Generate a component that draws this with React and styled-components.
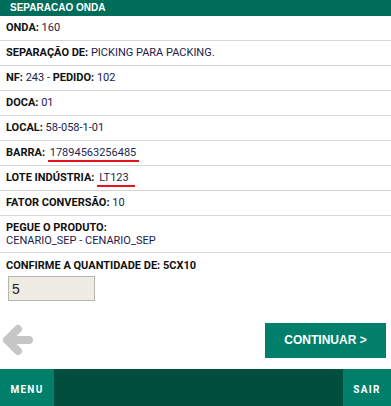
import React from "react";
import styled, { createGlobalStyle } from "styled-components";

const Global = createGlobalStyle`
  html, body { margin: 0; padding: 0; background: #fff; }
  body { font-family: Roboto, "Liberation Sans", Arial, sans-serif; }
  * { box-sizing: border-box; }
`;

const Page = styled.div`
  min-height: 100vh;
  display: flex;
  flex-direction: column;
`;

const Header = styled.div`
  height: 16px;
  line-height: 16px;
  padding-left: 10px;
  background: #006d5b;
  color: #fff;
  font-family: "Liberation Sans", Arial, sans-serif;
  font-weight: bold;
  font-size: 10px;
`;

const Row = styled.div`
  height: ${(p) => (p.$tall ? "37px" : "25px")};
  border-bottom: 1px solid #d6d6d6;
  padding: ${(p) => (p.$tall ? "5px 6px 0" : "0 6px")};
  font-size: 11px;
  line-height: ${(p) => (p.$tall ? "13px" : "24px")};
  white-space: nowrap;
  color: #1e1a40;
`;

const Label = styled.b`
  font-weight: bold;
  color: #111;
`;

const Value = styled.span`
  color: #221a4c;
`;

const Marked = styled.span`
  color: #1c2850;
  border-bottom: 2px solid #e3141e;
  padding: 0 ${(p) => p.$right || 3}px 1px 2px;
`;

const Line = styled.div`
  line-height: 13px;
`;

const Confirm = styled.div`
  padding: 6px 6px 0;
  font-size: 11px;
  line-height: 13px;
`;

const QtyInput = styled.input`
  display: block;
  margin: 4px 0 0 2px;
  width: 87px;
  height: 25px;
  border: 1px solid #b4b4b0;
  background: #efede3;
  font-family: "Liberation Sans", Arial, sans-serif;
  font-size: 14px;
  color: #222;
  padding: 0 0 0 3px;
  outline: none;
`;

const Actions = styled.div`
  display: flex;
  align-items: center;
  justify-content: space-between;
  padding: 21px 5px 0 0;
`;

const BackButton = styled.button`
  border: 0;
  background: none;
  padding: 0;
  width: 34px;
  height: 36px;
  display: flex;
  cursor: pointer;
`;

const Continue = styled.button`
  width: 121px;
  height: 35px;
  border: 0;
  background: #00806a;
  color: #fff;
  font-family: "Liberation Sans", Arial, sans-serif;
  font-weight: bold;
  font-size: 12px;
  cursor: pointer;
`;

const Footer = styled.div`
  margin-top: auto;
  height: 37px;
  display: flex;
  background: #004f3e;
`;

const FooterItem = styled.div`
  width: ${(p) => p.$w}px;
  background: #00806a;
  color: #fff;
  font-family: Roboto, "Liberation Sans", Arial, sans-serif;
  font-weight: bold;
  font-size: 10px;
  letter-spacing: 1.3px;
  display: flex;
  align-items: center;
  justify-content: center;
  padding-top: 4px;
`;

const Spacer = styled.div`
  flex: 1;
`;

export default function App() {
  return (
    <Page>
      <Global />
      <Header>SEPARACAO ONDA</Header>
      <Row>
        <Label>ONDA:</Label> <Value>160</Value>
      </Row>
      <Row>
        <Label>SEPARAÇÃO DE:</Label> <Value>PICKING PARA PACKING.</Value>
      </Row>
      <Row>
        <Label>NF:</Label> <Value>243 - </Value>
        <Label>PEDIDO:</Label> <Value>102</Value>
      </Row>
      <Row>
        <Label>DOCA:</Label> <Value>01</Value>
      </Row>
      <Row>
        <Label>LOCAL:</Label> <Value>58-058-1-01</Value>
      </Row>
      <Row>
        <Label>BARRA:</Label> <Marked>17894563256485</Marked>
      </Row>
      <Row>
        <Label>LOTE INDÚSTRIA:</Label> <Marked $right={6}>LT123</Marked>
      </Row>
      <Row>
        <Label>FATOR CONVERSÃO:</Label> <Value>10</Value>
      </Row>
      <Row $tall>
        <Line>
          <Label>PEGUE O PRODUTO:</Label>
        </Line>
        <Line>
          <Value>CENARIO_SEP - CENARIO_SEP</Value>
        </Line>
      </Row>
      <Confirm>
        <Label>CONFIRME A QUANTIDADE DE: 5CX10</Label>
        <QtyInput defaultValue="5" />
      </Confirm>
      <Actions>
        <BackButton aria-label="Voltar">
          <svg width="34" height="36" viewBox="0 0 34 36">
            <path
              d="M7 18 L29 18 M18 7 L7 18 L18 29"
              fill="none"
              stroke="#c6c6c6"
              strokeWidth="8"
              strokeLinecap="round"
              strokeLinejoin="round"
            />
          </svg>
        </BackButton>
        <Continue>CONTINUAR &gt;</Continue>
      </Actions>
      <Footer>
        <FooterItem $w={54}>MENU</FooterItem>
        <Spacer />
        <FooterItem $w={48}>SAIR</FooterItem>
      </Footer>
    </Page>
  );
}
